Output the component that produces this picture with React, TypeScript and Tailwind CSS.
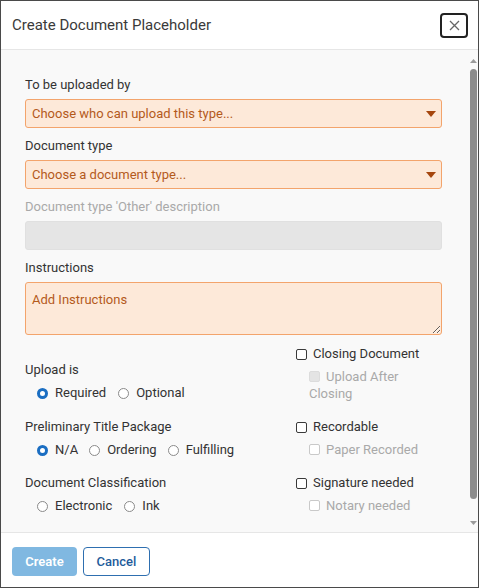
import React from "react";

const Radio = ({ checked, label }: { checked?: boolean; label: string }) => (
  <div className="flex items-center">
    {checked ? (
      <span className="w-[11px] h-[11px] rounded-full border-[3px] border-[#1b6ec2] bg-white" />
    ) : (
      <span className="w-[11px] h-[11px] rounded-full border border-[#8a8a8a] bg-white" />
    )}
    <span className="ml-[7px] text-[#333]">{label}</span>
  </div>
);

const Check = ({ label }: { label: string }) => (
  <div className="flex items-center h-[18px]">
    <span className="w-[11px] h-[11px] rounded-[2px] border-[1.5px] border-[#3a3a3a] bg-white" />
    <span className="ml-[6px] text-[#333]">{label}</span>
  </div>
);

const SubCheck = ({ label, filled }: { label: string; filled?: boolean }) => (
  <div className="ml-[13px] mt-[5px] leading-[17px] text-[#a9a9a9]">
    <span
      className={
        "inline-block align-[-1px] w-[11px] h-[11px] rounded-[2px] border mr-[6px] " +
        (filled ? "bg-[#e4e4e4] border-[#dcdcdc]" : "bg-white border-[#c9c9c9]")
      }
    />
    {label}
  </div>
);

const Caret = () => (
  <svg width="10" height="6" viewBox="0 0 10 6" className="shrink-0">
    <path d="M0 0 H10 L5 6 Z" fill="#a5460e" />
  </svg>
);

const SelectBox = ({ text }: { text: string }) => (
  <div className="h-[29px] rounded-[3px] border border-[#f3a46c] bg-[#fde9d9] flex items-center justify-between pl-[6px] pr-[5px]">
    <span className="text-[#b45a1c]">{text}</span>
    <Caret />
  </div>
);

export default function App() {
  return (
    <div
      className="w-[479px] h-[588px] border border-[#4a4a4a] bg-white flex flex-col text-[13px] leading-[18px]"
      style={{ fontFamily: "Roboto, 'Liberation Sans', sans-serif" }}
    >
      <div className="h-[49px] shrink-0 flex items-center justify-between pl-[11px] pr-[10px] border-b border-[#e6e6e6]">
        <span className="text-[15px] text-[#3a3a3a]">Create Document Placeholder</span>
        <button className="w-[28px] h-[25px] rounded-[4px] border-2 border-[#222] flex items-center justify-center bg-white">
          <svg width="11" height="11" viewBox="0 0 11 11">
            <path d="M1 1 L10 10 M10 1 L1 10" stroke="#666" strokeWidth="1.3" />
          </svg>
        </button>
      </div>

      <div className="flex-1 flex bg-[#f9f9f9] min-h-0">
        <div className="flex-1 pl-[24px] pr-[26px] pt-[26px]">
          <div className="text-[#333]">To be uploaded by</div>
          <div className="mt-[5px]">
            <SelectBox text="Choose who can upload this type..." />
          </div>
          <div className="mt-[9px] text-[#333]">Document type</div>
          <div className="mt-[5px]">
            <SelectBox text="Choose a document type..." />
          </div>
          <div className="mt-[9px] text-[#a9a9a9]">Document type 'Other' description</div>
          <div className="mt-[5px] h-[29px] rounded-[3px] bg-[#e5e5e5] border border-[#e0e0e0]" />
          <div className="mt-[9px] text-[#333]">Instructions</div>
          <textarea
            className="mt-[5px] block w-full h-[53px] rounded-[3px] border border-[#f3a46c] bg-[#fde9d9] px-[6px] pt-[8px] text-[13px] leading-[18px] text-[#b45a1c] placeholder:text-[#b45a1c] outline-none"
            placeholder="Add Instructions"
          />

          <div className="mt-[10px] grid grid-cols-[271px_1fr]">
            <div className="pt-[16px]">
              <div className="text-[#333]">Upload is</div>
              <div className="mt-[5px] ml-[12px] flex gap-[12px]">
                <Radio checked label="Required" />
                <Radio label="Optional" />
              </div>
            </div>
            <div>
              <Check label="Closing Document" />
              <div className="w-[120px]">
                <SubCheck label="Upload After Closing" filled />
              </div>
            </div>
          </div>

          <div className="mt-[16px] grid grid-cols-[271px_1fr]">
            <div>
              <div className="text-[#333]">Preliminary Title Package</div>
              <div className="mt-[5px] ml-[12px] flex gap-[11px]">
                <Radio checked label="N/A" />
                <Radio label="Ordering" />
                <Radio label="Fulfilling" />
              </div>
            </div>
            <div>
              <Check label="Recordable" />
              <SubCheck label="Paper Recorded" />
            </div>
          </div>

          <div className="mt-[15px] grid grid-cols-[271px_1fr]">
            <div>
              <div className="text-[#333]">Document Classification</div>
              <div className="mt-[5px] ml-[12px] flex gap-[12px]">
                <Radio label="Electronic" />
                <Radio label="Ink" />
              </div>
            </div>
            <div>
              <Check label="Signature needed" />
              <SubCheck label="Notary needed" />
            </div>
          </div>
        </div>

        <div className="w-[10px] shrink-0 flex flex-col items-center pt-[9px]">
          <svg width="7" height="4" viewBox="0 0 7 4">
            <path d="M0 4 L3.5 0 L7 4 Z" fill="#9a9a9a" />
          </svg>
          <div className="mt-[6px] w-[7px] h-[430px] rounded-[4px] bg-[#8c8c8c]" />
          <svg width="7" height="4" viewBox="0 0 7 4" className="mt-[22px]">
            <path d="M0 0 L7 0 L3.5 4 Z" fill="#9a9a9a" />
          </svg>
        </div>
      </div>

      <div className="h-[55px] shrink-0 border-t border-[#e6e6e6] flex items-start gap-[6px] pl-[11px] pt-[14px]">
        <button className="w-[65px] h-[29px] rounded-[4px] bg-[#80b8e1] text-white font-semibold text-[13px]">
          Create
        </button>
        <button className="w-[67px] h-[29px] rounded-[4px] border border-[#2e6fb0] bg-white text-[#1f5c9b] font-medium text-[13px]">
          Cancel
        </button>
      </div>
    </div>
  );
}
